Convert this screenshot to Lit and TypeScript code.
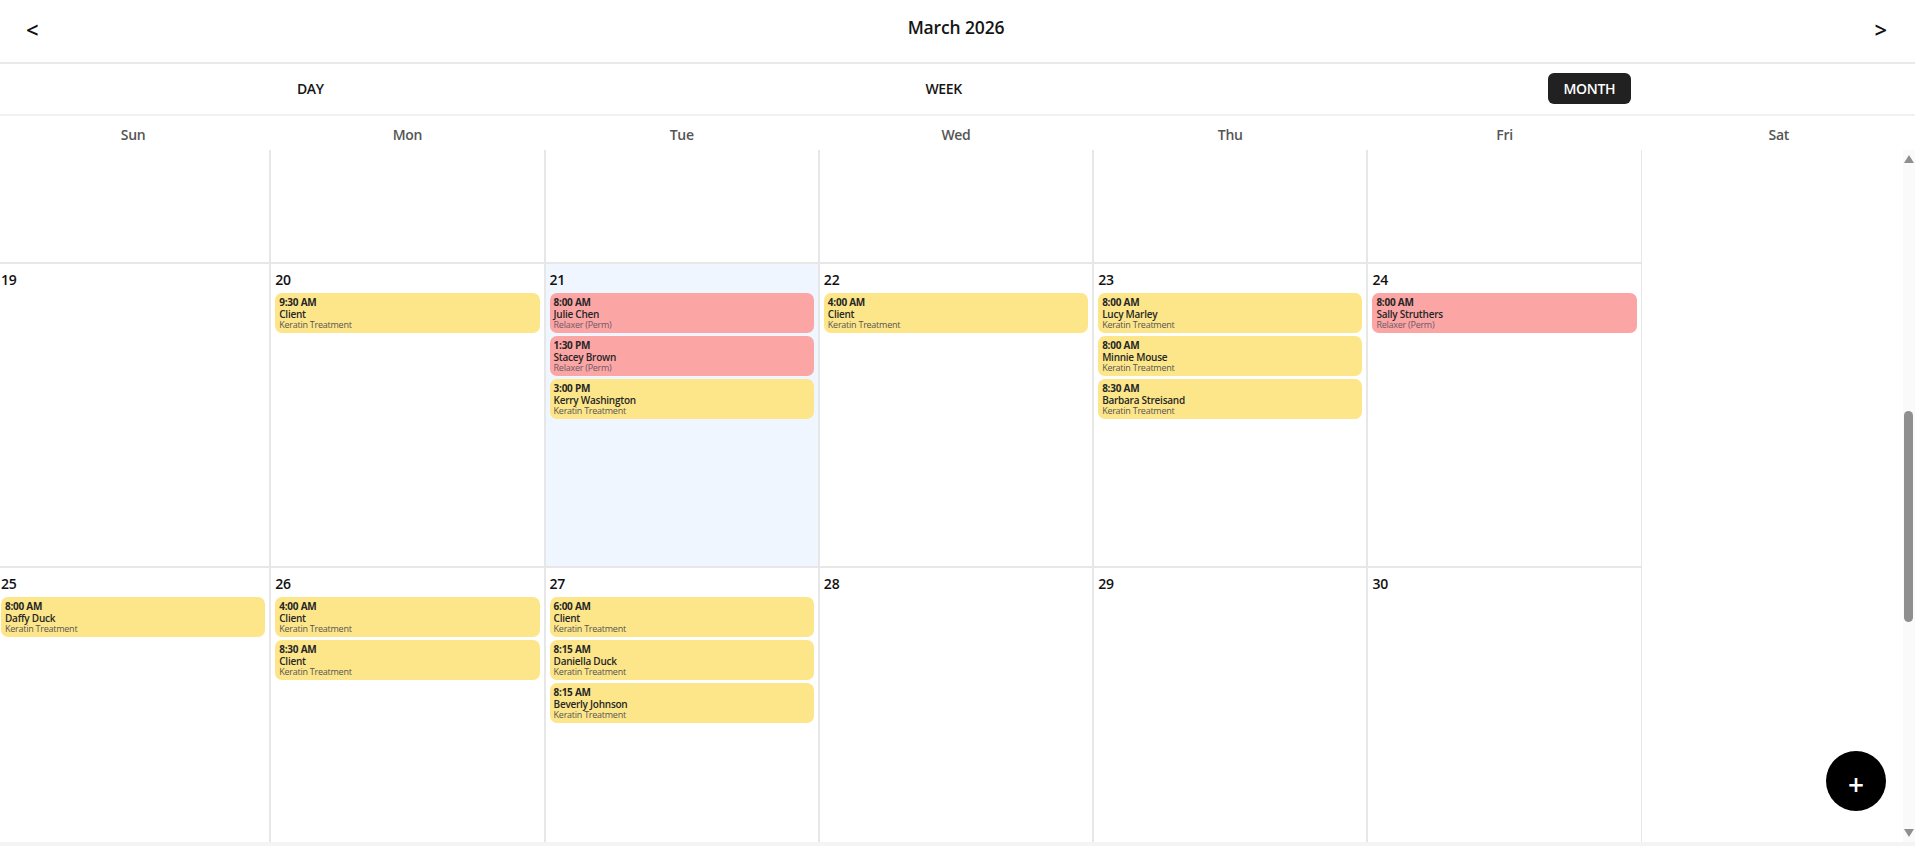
import { LitElement, html, css } from "lit";
import { customElement } from "lit/decorators.js";

type Ev = { t: string; n: string; s: string; red?: boolean };
const K = "Keratin Treatment";
const R = "Relaxer (Perm)";
const rows: { d: string; evs: Ev[]; today?: boolean }[][] = [
  [
    { d: "19", evs: [] },
    { d: "20", evs: [{ t: "9:30 AM", n: "Client", s: K }] },
    { d: "21", today: true, evs: [
      { t: "8:00 AM", n: "Julie Chen", s: R, red: true },
      { t: "1:30 PM", n: "Stacey Brown", s: R, red: true },
      { t: "3:00 PM", n: "Kerry Washington", s: K },
    ] },
    { d: "22", evs: [{ t: "4:00 AM", n: "Client", s: K }] },
    { d: "23", evs: [
      { t: "8:00 AM", n: "Lucy Marley", s: K },
      { t: "8:00 AM", n: "Minnie Mouse", s: K },
      { t: "8:30 AM", n: "Barbara Streisand", s: K },
    ] },
    { d: "24", evs: [{ t: "8:00 AM", n: "Sally Struthers", s: R, red: true }] },
  ],
  [
    { d: "25", evs: [{ t: "8:00 AM", n: "Daffy Duck", s: K }] },
    { d: "26", evs: [
      { t: "4:00 AM", n: "Client", s: K },
      { t: "8:30 AM", n: "Client", s: K },
    ] },
    { d: "27", evs: [
      { t: "6:00 AM", n: "Client", s: K },
      { t: "8:15 AM", n: "Daniella Duck", s: K },
      { t: "8:15 AM", n: "Beverly Johnson", s: K },
    ] },
    { d: "28", evs: [] },
    { d: "29", evs: [] },
    { d: "30", evs: [] },
  ],
];

@customElement("app-root")
export class AppRoot extends LitElement {
  static styles = css`
    :host {
      display: block;
      position: relative;
      width: 1915px;
      height: 846px;
      overflow: hidden;
      background: #fff;
      font-family: "Open Sans", "Noto Sans", sans-serif;
      color: #111;
    }
    .top {
      box-sizing: border-box;
      height: 64px;
      border-bottom: 2px solid #e9e9e9;
      display: grid;
      grid-template-columns: 1fr auto 1fr;
      align-items: center;
      padding: 0 28px 0 26px;
    }
    .nav { font-size: 22px; font-weight: 600; line-height: 1; color: #111; height: 24px; margin-top: -2px; }
    .nav.r { justify-self: end; }
    .title { font-size: 17.5px; font-weight: 600; letter-spacing: -0.15px; margin: -8px 1px 0 0; color: #151515; }
    .tabs {
      box-sizing: border-box;
      height: 52px;
      border-bottom: 2px solid #f1f1f1;
      display: flex;
      justify-content: space-around;
      align-items: center;
      padding: 0 3px 2px 0;
    }
    .tab {
      box-sizing: border-box;
      height: 31px;
      padding: 0 16px;
      border-radius: 6px;
      display: flex;
      align-items: center;
      font-size: 14px;
      font-weight: 600;
      letter-spacing: -0.35px;
      color: #151515;
    }
    .tab.wk { padding: 0 24px; }
    .tab.on { background: #212121; color: #fff; }
    .grid7 {
      display: grid;
      grid-template-columns: repeat(7, 274.286px);
      margin-left: -4px;
      width: 1920px;
    }
    .heads { height: 34px; align-items: center; }
    .head { text-align: center; font-size: 14px; font-weight: 600; color: #555; letter-spacing: -0.3px; margin-top: 3px; }
    .body { height: 692px; overflow: hidden; }
    .week { height: 304px; margin-left: -3px; }
    .week.first { height: 114px; }
    .week.last { height: 274px; }
    .cell {
      box-sizing: border-box;
      border-right: 2px solid #e7e7e7;
      border-bottom: 2px solid #e7e7e7;
      padding: 6px 4px 0 4px;
    }
    .cell.fri { border-right-width: 1px; width: calc(100% - 1px); }
    .cell.sat { border: 0; }
    .last .cell { border-bottom: 0; }
    .cell.today { background: #eff6ff; }
    .num { font-size: 14px; font-weight: 600; line-height: 19px; height: 23px; color: #111; letter-spacing: -0.2px; }
    .ev {
      box-sizing: border-box;
      height: 40px;
      margin-bottom: 3px;
      padding: 3px 4px 0;
      border-radius: 7px;
      background: #fde68a;
      line-height: 12px;
      font-size: 10px;
      letter-spacing: -0.25px;
      white-space: nowrap;
      overflow: hidden;
    }
    .ev.red { background: #fca5a5; }
    .ev .t { font-weight: 700; color: #262626; }
    .ev .n { font-weight: 600; color: #262626; }
    .ev .s { font-weight: 400; font-size: 9px; letter-spacing: -0.25px; line-height: 10px; color: #555; }
    .ev.red .s { color: #6b5a66; }
    .track {
      position: absolute;
      top: 150px;
      left: 1903px;
      width: 12px;
      height: 692px;
      background: #fafafa;
    }
    .thumb {
      position: absolute;
      top: 261px;
      left: 1px;
      width: 9px;
      height: 211px;
      border-radius: 5px;
      background: #8f8f8f;
    }
    .arrow { position: absolute; left: 1px; width: 10px; height: 8px; fill: #8f8f8f; }
    .arrow.up { top: 5px; }
    .arrow.dn { bottom: 5px; }
    .foot {
      position: absolute;
      left: 0;
      right: 0;
      top: 842px;
      height: 4px;
      background: #f4f4f4;
    }
    .fab {
      position: absolute;
      left: 1826px;
      top: 751px;
      width: 60px;
      height: 60px;
      border-radius: 50%;
      background: #000;
      color: #fff;
      display: flex;
      align-items: center;
      justify-content: center;
      font-size: 28px;
      font-weight: 600;
      padding-top: 5px;
      box-sizing: border-box;
      line-height: 1;
    }
  `;

  private cell(c: { d: string; evs: Ev[]; today?: boolean }, i: number) {
    return html`<div class="cell ${c.today ? "today" : ""} ${i === 5 ? "fri" : ""}">
      <div class="num">${c.d}</div>
      ${c.evs.map(
        (e) => html`<div class="ev ${e.red ? "red" : ""}">
          <div class="t">${e.t}</div>
          <div class="n">${e.n}</div>
          <div class="s">${e.s}</div>
        </div>`
      )}
    </div>`;
  }

  render() {
    return html`
      <div class="top">
        <div class="nav">&lt;</div>
        <div class="title">March 2026</div>
        <div class="nav r">&gt;</div>
      </div>
      <div class="tabs">
        <div class="tab">DAY</div>
        <div class="tab wk">WEEK</div>
        <div class="tab on">MONTH</div>
      </div>
      <div class="grid7 heads">
        ${["Sun", "Mon", "Tue", "Wed", "Thu", "Fri", "Sat"].map((d) => html`<div class="head">${d}</div>`)}
      </div>
      <div class="body">
        <div class="grid7 week first">
          ${[0, 1, 2, 3, 4, 5].map((i) => html`<div class="cell ${i === 5 ? "fri" : ""}"></div>`)}
          <div class="cell sat"></div>
        </div>
        ${rows.map(
          (r, ri) => html`<div class="grid7 week ${ri === 1 ? "last" : ""}">
            ${r.map((c, i) => this.cell(c, i))}
            <div class="cell sat"></div>
          </div>`
        )}
      </div>
      <div class="track">
        <svg class="arrow up" viewBox="0 0 10 8"><path d="M5 0 L10 8 L0 8 Z" /></svg>
        <div class="thumb"></div>
        <svg class="arrow dn" viewBox="0 0 10 8"><path d="M0 0 L10 0 L5 8 Z" /></svg>
      </div>
      <div class="foot"></div>
      <div class="fab">+</div>
    `;
  }
}
